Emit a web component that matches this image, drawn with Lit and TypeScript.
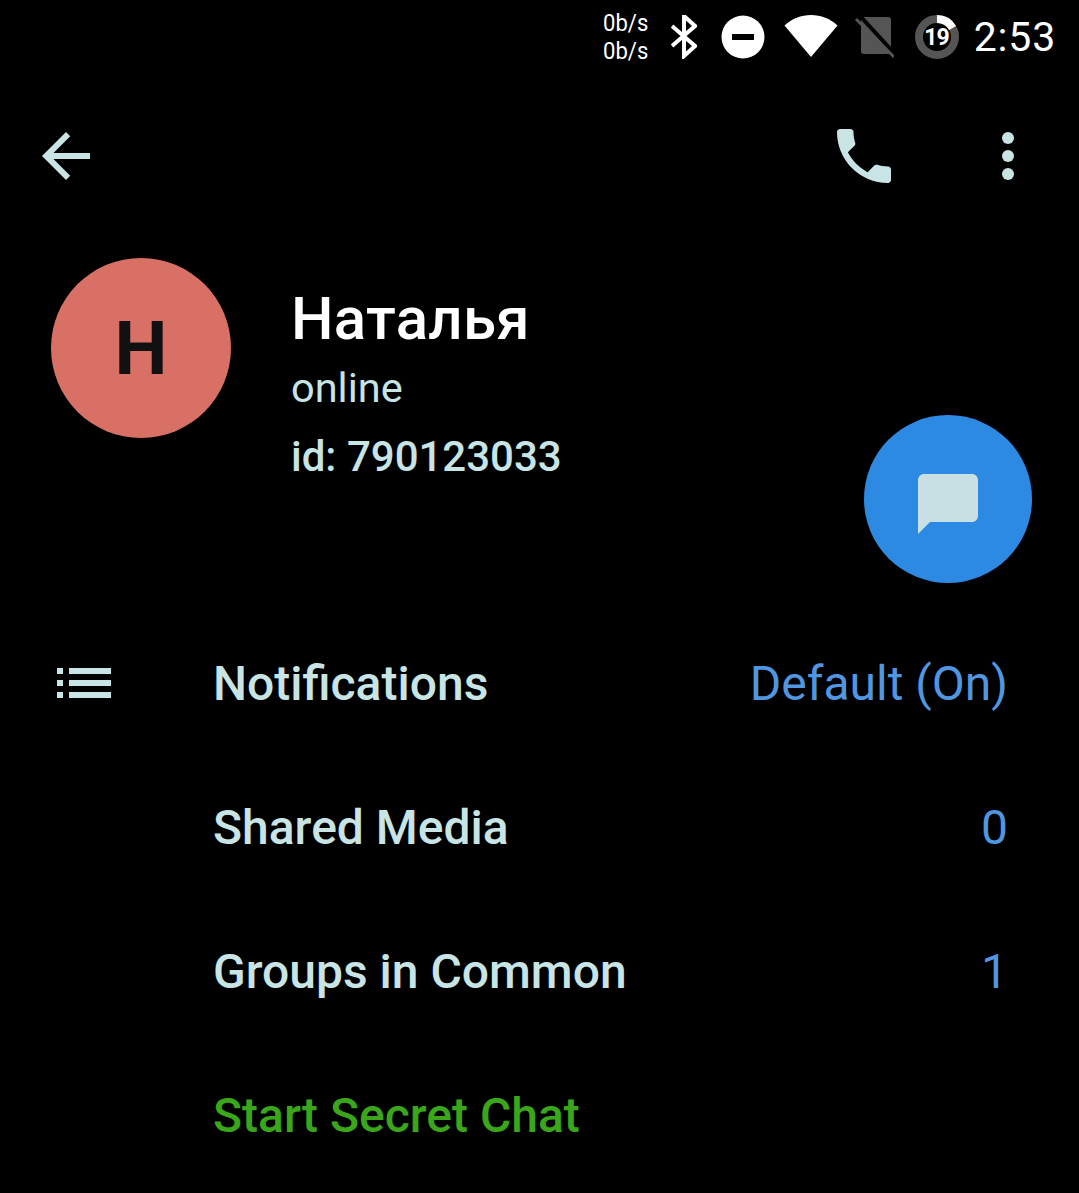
import { LitElement, css, html, svg } from "lit";
import { customElement } from "lit/decorators.js";

interface Row {
  label: string
  value?: string
  icon?: boolean
  green?: boolean
}

const rows: Row[] = [
  { label: "Notifications", value: "Default (On)", icon: true },
  { label: "Shared Media", value: "0" },
  { label: "Groups in Common", value: "1" },
  { label: "Start Secret Chat", green: true },
];

// material icons, 24 unit box drawn at 72px
const ICONS = {
  back: "M20 11H7.83l5.59-5.59L12 4l-8 8 8 8 1.41-1.41L7.83 13H20v-2z",
  phone: "M6.62 10.79c1.44 2.83 3.76 5.14 6.59 6.59l2.2-2.2c.27-.27.67-.36 1.02-.24 1.12.37 2.33.57 3.57.57.55 0 1 .45 1 1V20c0 .55-.45 1-1 1-9.39 0-17-7.61-17-17 0-.55.45-1 1-1h3.5c.55 0 1 .45 1 1 0 1.25.2 2.45.57 3.57.11.35.03.74-.25 1.02l-2.2 2.2z",
  list: "M3 13h2v-2H3v2zm0 4h2v-2H3v2zm0-8h2V7H3v2zm4 4h14v-2H7v2zm0 4h14v-2H7v2zM7 7v2h14V7H7z",
  chat: "M20 2H4c-1.1 0-2 .9-2 2v18l4-4h14c1.1 0 2-.9 2-2V4c0-1.1-.9-2-2-2z",
};

const icon = (d: string) => html`<svg class="icon" viewBox="0 0 24 24"><path d=${d}></path></svg>`;

@customElement("app-root")
export class AppRoot extends LitElement {
  static styles = css`
    :host {
      display: block;
      position: relative;
      height: 1193px;
      overflow: hidden;
      background: #000;
      color: #c8e4e4;
      font-family: Roboto, "Noto Sans", sans-serif;
    }

    .status {
      height: 74px;
      display: flex;
      align-items: center;
      justify-content: flex-end;
      padding-right: 23px;
      color: #fff;
    }

    .speed {
      font-size: 24px;
      line-height: 28px;
      width: 44px;
      margin-right: 24px;
      transform: scaleX(0.92);
      transform-origin: left center;
    }

    .status svg { display: block; flex: none; fill: #fff; }
    .bt { width: 26px; height: 44px; margin-right: 24px; }
    .dnd { width: 44px; height: 44px; margin-right: 19px; }
    .wifi { width: 54px; height: 44px; margin-right: 16px; }
    .sim { width: 40px; height: 44px; margin-right: 21px; }
    .timer { width: 44px; height: 44px; margin-right: 15px; }

    .time {
      font-size: 41px;
      line-height: 44px;
      letter-spacing: 0.8px;
    }

    .toolbar {
      height: 164px;
      display: flex;
      align-items: center;
      padding: 0 35px 0 30px;
    }

    .icon {
      display: block;
      width: 72px;
      height: 72px;
      flex: none;
      fill: currentColor;
    }

    .toolbar .phone { margin-left: auto; margin-right: 72px; }

    .header {
      display: flex;
      height: 353px;
      margin-top: 20px;
      padding-left: 51px;
      box-sizing: border-box;
    }

    .avatar {
      width: 180px;
      height: 180px;
      border-radius: 50%;
      background: #d97066;
      color: #111;
      display: flex;
      align-items: center;
      justify-content: center;
      font-size: 75px;
      font-weight: 700;
    }

    .info {
      margin-left: 60px;
      padding-top: 26px;
    }

    .name {
      color: #fff;
      font-size: 60px;
      font-weight: 500;
      line-height: 69px;
      letter-spacing: 0.3px;
    }

    .online {
      font-size: 41.5px;
      line-height: 69px;
    }

    .id {
      font-size: 42px;
      font-weight: 500;
      line-height: 69px;
    }

    .fab {
      position: absolute;
      left: 864px;
      top: 415px;
      width: 168px;
      height: 168px;
      border-radius: 50%;
      background: #2d8ae2;
      display: flex;
      align-items: center;
      justify-content: center;
      color: #c8dfe4;
    }

    .fab .icon { margin-top: 10px; }

    .row {
      height: 144px;
      display: grid;
      grid-template-columns: 213px 1fr auto;
      align-items: center;
      padding-right: 71px;
      font-size: 48px;
      font-weight: 500;
    }

    .row .icon { margin-left: 48px; }
    .label { grid-column: 2; }
    .value { color: #5096e0; font-weight: 400; }
    .green { color: #3aa619; }
  `;

  private statusIcons() {
    return html`
      <svg class="bt" viewBox="0 0 26 44">
        <path fill="none" stroke="#fff" stroke-width="4" d="M1 11 24 31 13 41V1l11 10L1 31"></path>
      </svg>
      <svg class="dnd" viewBox="0 0 44 44">
        <path fill-rule="evenodd" d="M22 .5a21.5 21.5 0 1 0 0 43 21.5 21.5 0 0 0 0-43zM11 19h22v6H11z"></path>
      </svg>
      <svg class="wifi" viewBox="0 1 54 44">
        <path d="M27 43 .5 11.500C8 4.500 17 1 27 1s19 3.500 26.500 10.500z"></path>
      </svg>
      <svg class="sim" viewBox="0 0 40 44">
        <path fill="#555" d="M7 5a3 3 0 0 1 3-3h24a3 3 0 0 1 3 3v31a3 3 0 0 1-3 3H10a3 3 0 0 1-3-3z"></path>
        <path stroke="#000" stroke-width="4" fill="none" d="M6 1l36 39"></path>
        <path stroke="#555" stroke-width="3" fill="none" d="M2 4l38 38"></path>
      </svg>
      <svg class="timer" viewBox="0 0 44 44">
        ${svg`
          <circle cx="22" cy="22" r="18" fill="none" stroke="#555" stroke-width="8"></circle>
          <path d="M22 4a18 18 0 0 1 15.600 9" fill="none" stroke="#fff" stroke-width="8"></path>
          <text x="21.500" y="30" text-anchor="middle" font-size="23" font-weight="700" letter-spacing="-1" fill="#fff">19</text>
        `}
      </svg>
    `;
  }

  render() {
    return html`
      <div class="status">
        <div class="speed">0b/s<br />0b/s</div>
        ${this.statusIcons()}
        <div class="time">2:53</div>
      </div>
      <div class="toolbar">
        ${icon(ICONS.back)}
        <div class="phone">${icon(ICONS.phone)}</div>
        <svg class="icon" viewBox="0 0 24 24">
          <circle cx="12" cy="6" r="2"></circle>
          <circle cx="12" cy="12" r="2"></circle>
          <circle cx="12" cy="18" r="2"></circle>
        </svg>
      </div>
      <div class="header">
        <div class="avatar">Н</div>
        <div class="info">
          <div class="name">Наталья</div>
          <div class="online">online</div>
          <div class="id">id: 790123033</div>
        </div>
      </div>
      <div class="fab">${icon(ICONS.chat)}</div>
      ${rows.map((row) => html`
        <div class="row ${row.green ? "green" : ""}">
          ${row.icon ? icon(ICONS.list) : ""}
          <div class="label">${row.label}</div>
          ${row.value ? html`<div class="value">${row.value}</div>` : ""}
        </div>
      `)}
    `;
  }
}
